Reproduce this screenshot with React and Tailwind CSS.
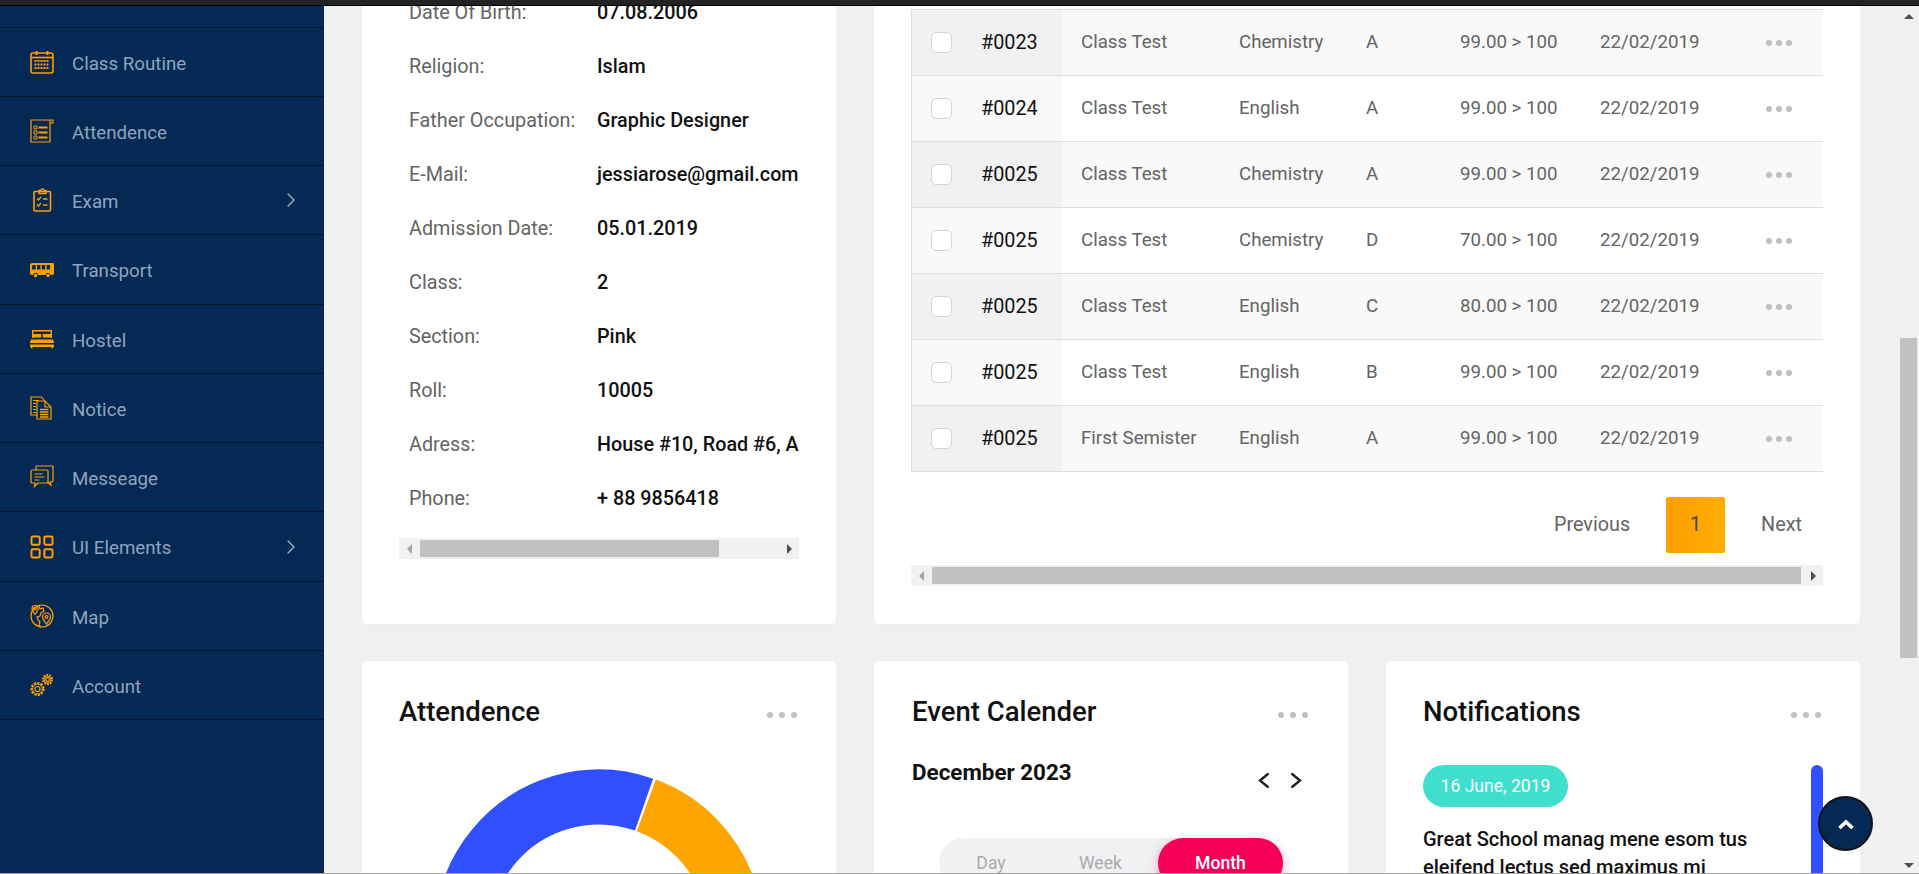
import { ChevronRight, LayoutGrid } from 'lucide-react'

const ORANGE = '#ffa001'

const CalendarIcon = () => (
  <svg width="24" height="24" viewBox="0 0 24 24" fill="none" stroke={ORANGE}>
    <rect x="1" y="3" width="22" height="20" rx="2" strokeWidth="1.6" />
    <path d="M1 7.5h22" strokeWidth="1.6" />
    <path d="M6.5 1v4M17.5 1v4" strokeWidth="2" />
    <path d="M4.5 11h15M4.5 14.5h15M4.5 18h15" strokeWidth="2" strokeDasharray="2 1" />
  </svg>
)

const AttendIcon = () => (
  <svg width="24" height="24" viewBox="0 0 24 24" fill="none" stroke={ORANGE}>
    <path d="M1 1h19v22H1zM1 1h22v3h-3" strokeWidth="1.2" />
    <path d="M4 7h3v3H4zM4 12h3v3H4zM4 17h3v3H4z" strokeWidth="1" />
    <path d="M8.5 8.5h9M8.5 13.5h9M8.5 18.5h9" strokeWidth="2" />
  </svg>
)

const ExamIcon = () => (
  <svg width="24" height="24" viewBox="0 0 24 24" fill="none" stroke={ORANGE}>
    <rect x="4" y="3.5" width="16.5" height="19.5" rx="1" strokeWidth="1.6" />
    <path d="M9 4V2.5h2a1.5 1.5 0 0 1 3 0h2V5.5H9z" strokeWidth="1.4" />
    <path d="M7 10.5l1.5 1.5 2.5-3M7 16.5l1.5 1.5 2.5-3" strokeWidth="1.4" />
    <path d="M13 11h4.5M13 17h4.5" strokeWidth="1.6" />
  </svg>
)

const BusIcon = () => (
  <svg width="24" height="24" viewBox="0 0 24 24" fill={ORANGE}>
    <path d="M2 5h21a1 1 0 0 1 1 1v9a2 2 0 0 1-2 2H2a2 2 0 0 1-2-2V7a2 2 0 0 1 2-2z" />
    <path d="M2.5 7h3.2v4.5H1.8zM7 7h3.4v4.5H7zM11.8 7h3.4v4.5h-3.4zM16.6 7h3.4v4.5h-3.4z" fill="#042954" />
    <circle cx="5.5" cy="17.5" r="2.2" stroke="#042954" />
    <circle cx="18" cy="17.5" r="2.2" stroke="#042954" />
  </svg>
)

const BedIcon = () => (
  <svg width="24" height="24" viewBox="0 0 24 24" fill={ORANGE}>
    <path d="M2 3h20v1.4H2zM2 4.4h1.4V11H2zM20.6 4.4H22V11h-1.4z" />
    <path d="M3 7h8.2v3.6H3zM12.8 7H21v3.6h-8.2z" />
    <path d="M1 12.5h22L24 15v1H0v-1zM0 17.5h24V20H0zM1 20h1.4v1.6H1zM21.6 20H23v1.6h-1.4z" />
  </svg>
)

const NoticeIcon = () => (
  <svg width="24" height="24" viewBox="0 0 24 24" fill="none" stroke={ORANGE} strokeWidth="1.2">
    <path d="M7 19H1V1h10.5l3 4" />
    <path d="M7 5h8l6 6v12H7z" />
    <path d="M15 5v6h6" />
    <path d="M3 4.5h6M3 7.5h3M3 10.5h3M3 13.5h3M3 16.5h3" />
    <path d="M10 13.5h8.5M10 16h8.5M10 18.5h8.5M10 21h8.5" strokeWidth="1.4" />
  </svg>
)

const MessageIcon = () => (
  <svg width="24" height="24" viewBox="0 0 24 24" fill="none" stroke={ORANGE} strokeWidth="1.2">
    <path d="M6 5V2a1 1 0 0 1 1-1h16v15l-1 1h-2l1 3-4-3" />
    <path d="M1 6a1 1 0 0 1 1-1h15a1 1 0 0 1 1 1v11a1 1 0 0 1-1 1H8l-3.5 3.5.7-3.5H2a1 1 0 0 1-1-1z" />
    <path d="M4.5 9h8M4.5 12h10M4.5 15h5" />
  </svg>
)

const GlobeIcon = () => (
  <svg width="24" height="24" viewBox="0 0 24 24" fill="none" stroke={ORANGE} strokeWidth="1.2">
    <circle cx="12" cy="12" r="11" />
    <path d="M5 10.5C2.800 7.500 2 6 2 4.500a3 3 0 0 1 6 0C8 6 6.800 8 5 10.500z" />
    <circle cx="5" cy="4.500" r="1.100" />
    <path d="M16.500 20c-2.200-2.800-4-4.500-4-7a4 4 0 0 1 8 0c0 2.500-1.800 4.200-4 7z" />
    <circle cx="16.500" cy="13" r="1.400" />
    <path d="M9 2l1 3 3-1 1 3-3 2-1 3-3 1 1 3 2 2-1 3 2 2" />
  </svg>
)

const Gear = ({ cx, cy, r, h }) => (
  <g>
    <circle cx={cx} cy={cy} r={r} strokeDasharray={`${h} ${h * 0.55}`} strokeWidth="2.2" />
    <circle cx={cx} cy={cy} r={r - 1.2} strokeWidth="0.9" />
    <circle cx={cx} cy={cy} r={r / 2.4} strokeWidth="1.2" />
  </g>
)

const GearsIcon = () => (
  <svg width="24" height="24" viewBox="0 0 24 24" fill="none" stroke={ORANGE}>
    <Gear cx={7.500} cy={16} r={6} h={2.200} />
    <Gear cx={17.500} cy={6.500} r={4.500} h={1.800} />
  </svg>
)

const menu = [
  { label: 'Class Routine', icon: <CalendarIcon />, h: 'h-[69px]' },
  { label: 'Attendence', icon: <AttendIcon />, h: 'h-[69px]' },
  { label: 'Exam', icon: <ExamIcon />, arrow: true, h: 'h-[69px]' },
  { label: 'Transport', icon: <BusIcon />, h: 'h-[70px]' },
  { label: 'Hostel', icon: <BedIcon />, h: 'h-[69px]' },
  { label: 'Notice', icon: <NoticeIcon />, h: 'h-[69px]' },
  { label: 'Messeage', icon: <MessageIcon />, h: 'h-[69px]' },
  { label: 'UI Elements', icon: <LayoutGrid size={28} strokeWidth={1.7} color={ORANGE} className="-m-0.5" />, arrow: true, h: 'h-[70px]' },
  { label: 'Map', icon: <GlobeIcon />, h: 'h-[69px]' },
  { label: 'Account', icon: <GearsIcon />, h: 'h-[69px]' },
]

const profile = [
  ['Date Of Birth:', '07.08.2006'],
  ['Religion:', 'Islam'],
  ['Father Occupation:', 'Graphic Designer'],
  ['E-Mail:', 'jessiarose@gmail.com'],
  ['Admission Date:', '05.01.2019'],
  ['Class:', '2'],
  ['Section:', 'Pink'],
  ['Roll:', '10005'],
  ['Adress:', 'House #10, Road #6, Australia'],
  ['Phone:', '+ 88 9856418'],
]

const exams = [
  ['#0023', 'Class Test', 'Chemistry', 'A', '99.00 > 100'],
  ['#0024', 'Class Test', 'English', 'A', '99.00 > 100'],
  ['#0025', 'Class Test', 'Chemistry', 'A', '99.00 > 100'],
  ['#0025', 'Class Test', 'Chemistry', 'D', '70.00 > 100'],
  ['#0025', 'Class Test', 'English', 'C', '80.00 > 100'],
  ['#0025', 'Class Test', 'English', 'B', '99.00 > 100'],
  ['#0025', 'First Semister', 'English', 'A', '99.00 > 100'],
]

const Dots = ({ gap = 'gap-[6px]' }) => (
  <div className={`flex ${gap}`}>
    <span className="size-[6px] rounded-full bg-[#bfbfbf]" />
    <span className="size-[6px] rounded-full bg-[#bfbfbf]" />
    <span className="size-[6px] rounded-full bg-[#bfbfbf]" />
  </div>
)

const HScroll = ({ left, thumb }) => (
  <div className="flex h-[21px] items-center bg-[#f1f1f1]">
    <div className={`flex h-full items-center justify-center ${left}`}>
      <span className="border-y-[5px] border-r-[5px] border-y-transparent border-r-[#a3a3a3]" />
    </div>
    <div className={`h-[17px] bg-[#c1c1c1] ${thumb}`} />
    <div className="flex h-full flex-1 items-center justify-end pr-[7px]">
      <span className="border-y-[5px] border-l-[5px] border-y-transparent border-l-[#505050]" />
    </div>
  </div>
)

const CardHead = ({ title }) => (
  <div className="flex h-[30px] items-center justify-between">
    <h3 className="mt-[2px] text-[27.500px] font-medium leading-[30px] text-[#111]">{title}</h3>
    <div className="pt-2 pr-[2px]">
      <Dots />
    </div>
  </div>
)

const Donut = () => {
  const cx = 200
  const cy = 165
  const r = 137
  const point = (deg) => {
    const rad = (deg * Math.PI) / 180
    return `${cx + r * Math.sin(rad)} ${cy - r * Math.cos(rad)}`
  }
  return (
    <svg width="400" height="330" viewBox="0 0 400 330" fill="none" strokeWidth="55">
      <path d={`M${point(-120)} A${r} ${r} 0 0 1 ${point(19.2)}`} stroke="#304ffe" />
      <path d={`M${point(20.2)} A${r} ${r} 0 0 1 ${point(130)}`} stroke="#ffa500" />
    </svg>
  )
}

const App = () => {
  return (
    <div className="flex h-[874px] flex-col overflow-hidden bg-[#f0f1f3] font-['Roboto',sans-serif]">
      <div className="h-[6px] shrink-0 border-b border-black bg-[#232323]" />

      <div className="flex min-h-0 flex-1">
        <aside className="w-[324px] shrink-0 bg-[#042954]">
          <div className="h-[22px] border-b border-[#00152e]" />
          {menu.map((item) => (
            <div
              key={item.label}
              className={`flex items-center border-b border-[#00152e] pl-[30px] pr-[21px] ${item.h}`}
            >
              <span className="flex w-[24px] shrink-0 justify-center">{item.icon}</span>
              <span className="ml-[18px] mt-[4px] flex-1 text-[18.700px] text-[#8fa5bd]">{item.label}</span>
              {item.arrow && <ChevronRight size={24} strokeWidth={1.400} className="text-[#9db0c5]" />}
            </div>
          ))}
        </aside>

        <main className="min-w-0 flex-1 overflow-hidden pl-[38px] pr-[40px]">
          <div className="flex h-[618px] gap-[38px]">
            <section className="-mt-[100px] h-[718px] w-[474px] shrink-0 overflow-hidden rounded-b-[5px] bg-white pl-[37px] pr-[37px] pt-[80px] shadow-[0_10px_20px_rgba(0,0,0,0.02)]">
              <div className="overflow-hidden">
                {profile.map(([label, value]) => (
                  <div key={label} className="flex h-[54px] items-center whitespace-nowrap text-[19.800px]">
                    <span className="ml-[10px] w-[188px] shrink-0 text-[#646464]">{label}</span>
                    <span className="font-medium text-[#111]">{value}</span>
                  </div>
                ))}
              </div>
              <div className="mt-[12px]">
                <HScroll left="w-[21px]" thumb="w-[299px]" />
              </div>
            </section>

            <section className="flex min-w-0 flex-1 flex-col rounded-b-[5px] bg-white px-[37px] shadow-[0_10px_20px_rgba(0,0,0,0.02)]">
              <div className="mt-[3px] overflow-hidden border-t border-l border-[#dedede]">
                {exams.map(([id, type, subject, grade, marks], i) => (
                  <div
                    key={i}
                    className={`flex h-[66px] items-center border-b border-[#dedede] text-[18.700px] text-[#646464] ${i % 2 === 0 ? 'bg-[#f9f9f9]' : 'bg-white'}`}
                  >
                    <div className={`flex h-full w-[150px] shrink-0 items-center pl-[19px] ${i % 2 === 0 ? 'bg-[#f1f1f1]' : 'bg-[#f9f9f9]'}`}>
                      <span className="size-[21px] rounded-[5px] border border-[#d5d5d5] bg-white" />
                      <span className="ml-[29px] text-[19.800px] text-[#111]">{id}</span>
                    </div>
                    <span className="ml-[19px] w-[158px] shrink-0">{type}</span>
                    <span className="w-[127px] shrink-0">{subject}</span>
                    <span className="w-[94px] shrink-0">{grade}</span>
                    <span className="w-[140px] shrink-0">{marks}</span>
                    <span className="w-[166px] shrink-0">22/02/2019</span>
                    <Dots gap="gap-[4px]" />
                  </div>
                ))}
              </div>

              <div className="mt-[24px] flex h-[57px] items-center justify-end pr-[21px] text-[19.800px] text-[#646464]">
                <span>Previous</span>
                <span className="ml-[36px] flex h-[56px] w-[59px] items-center justify-center rounded-[2px] bg-gradient-to-r from-[#ff9d01] to-[#ffae01] text-[#444]">
                  1
                </span>
                <span className="ml-[36px]">Next</span>
              </div>
              <div className="mt-[12px]">
                <HScroll left="w-[21px]" thumb="w-[869px]" />
              </div>
            </section>
          </div>

          <div className="mt-[37px] flex gap-[38px]">
            <section className="h-[400px] w-[474px] shrink-0 rounded-t-[5px] bg-white px-[37px] pt-[35px]">
              <CardHead title="Attendence" />
              <div className="mt-[43px] flex justify-center">
                <Donut />
              </div>
            </section>

            <section className="h-[400px] w-[474px] shrink-0 rounded-t-[5px] bg-white px-[38px] pt-[35px]">
              <CardHead title="Event Calender" />
              <div className="mt-[31px] flex items-start justify-between">
                <h4 className="text-[22.400px] font-bold leading-[30px] text-[#111]">December 2023</h4>
                <div className="mr-[8px] mt-[15px] flex gap-[20px] text-[#222]">
                  <svg width="12" height="17" viewBox="0 0 12 17" fill="none" stroke="currentColor" strokeWidth="2.400">
                    <path d="M10.500 1.500L2 8.500l8.500 7" />
                  </svg>
                  <svg width="12" height="17" viewBox="0 0 12 17" fill="none" stroke="currentColor" strokeWidth="2.400">
                    <path d="M1.500 1.500L10 8.500l-8.500 7" />
                  </svg>
                </div>
              </div>
              <div className="ml-[27px] mt-[49px] flex h-[50px] w-[344px] items-center rounded-full bg-[#f0f1f3] text-[17.600px] text-[#aaaaaa]">
                <span className="w-[104px] text-center">Day</span>
                <span className="w-[115px] text-center">Week</span>
                <span className="flex h-full flex-1 items-center justify-center rounded-full bg-[#f50057] font-medium text-white shadow-[0_4px_12px_rgba(245,0,87,0.35)]">
                  Month
                </span>
              </div>
            </section>

            <section className="h-[400px] min-w-0 flex-1 rounded-t-[5px] bg-white pl-[37px] pr-[37px] pt-[35px]">
              <CardHead title="Notifications" />
              <div className="mt-[39px] flex justify-between">
                <div>
                  <span className="flex h-[42px] w-[145px] items-center justify-center rounded-full bg-[#40dfcd] text-[17.600px] text-white">
                    16 June, 2019
                  </span>
                  <p className="mt-[18px] w-[360px] text-[20px] font-medium leading-[28px] text-[#111]">
                    Great School manag mene esom tus eleifend lectus sed maximus mi faucibusnting.
                  </p>
                </div>
                <div className="h-[200px] w-[12px] rounded-full bg-[#304ffe]" />
              </div>
            </section>
          </div>
        </main>

        <div className="flex w-[19px] shrink-0 flex-col bg-[#f1f1f1]">
          <div className="flex h-[21px] items-center justify-center pr-[2px]">
            <span className="border-x-[5px] border-b-[5px] border-x-transparent border-b-[#505050]" />
          </div>
          <div className="mt-[311px] h-[320px] w-[17px] bg-[#c1c1c1]" />
          <div className="flex flex-1 items-end justify-center pb-[5px] pr-[2px]">
            <span className="border-x-[5px] border-t-[5px] border-x-transparent border-t-[#505050]" />
          </div>
        </div>
      </div>

      <div className="h-px shrink-0 bg-[#a5a5a5]" />

      <button className="fixed left-[1818px] top-[796px] flex size-[55px] items-center justify-center rounded-full border-2 border-[#141414] bg-[#042954] text-white">
        <svg width="16" height="10" viewBox="0 0 16 10" fill="none" stroke="white" strokeWidth="3.600">
          <path d="M1.500 9L8 3l6.500 6" />
        </svg>
      </button>
    </div>
  )
}

export default App
